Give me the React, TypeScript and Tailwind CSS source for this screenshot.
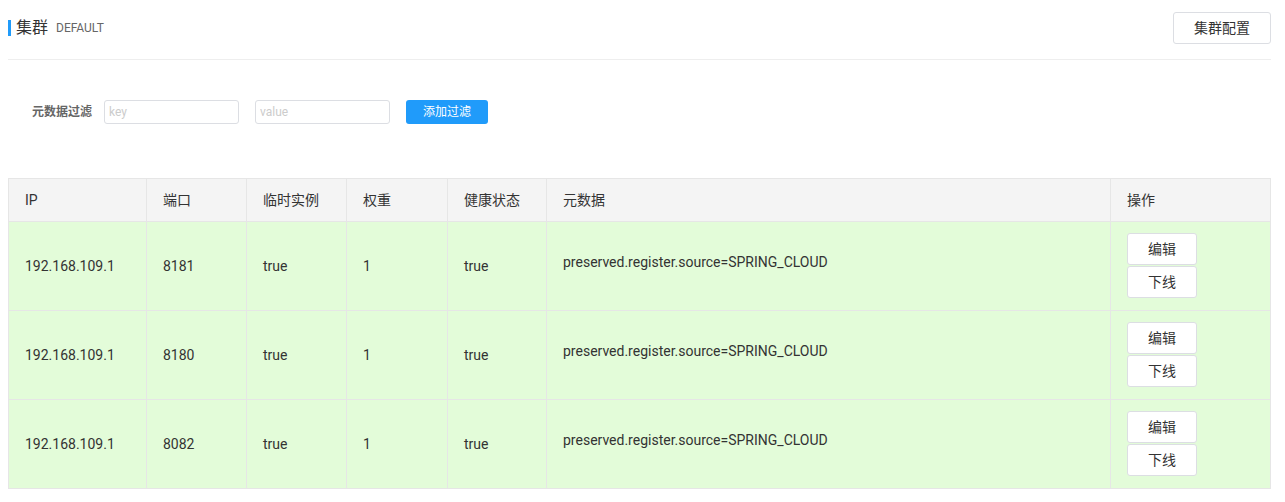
const font = { fontFamily: 'Roboto, "Noto Sans CJK SC", sans-serif' };

const rows = [
  { ip: '192.168.109.1', port: '8181' },
  { ip: '192.168.109.1', port: '8180' },
  { ip: '192.168.109.1', port: '8082' },
];

export default function App() {
  return (
    <div className="pl-2 pr-[14px] bg-white min-h-screen text-[#333]" style={font}>
      {/* Header */}
      <div className="flex items-center justify-between pt-3 pb-[15px] border-b border-[#eee]">
        <div className="flex items-center">
          <span className="w-[3px] h-4 bg-[#209bfa]" />
          <span className="ml-[5px] text-base text-[#333]">集群</span>
          <span className="ml-2 text-xs text-[#666]">DEFAULT</span>
        </div>
        <button className="w-[98px] h-8 border border-[#dcdee3] rounded-[3px] bg-white text-sm text-[#333]">
          集群配置
        </button>
      </div>

      {/* Filter */}
      <div className="flex items-center mt-10 pl-6">
        <span className="text-xs font-bold text-[#666] w-[60px]">元数据过滤</span>
        <input
          className="ml-3 w-[135px] h-6 border border-[#dcdee3] rounded-[3px] px-1 text-xs outline-none placeholder:text-[#ccc]"
          placeholder="key"
        />
        <input
          className="ml-4 w-[135px] h-6 border border-[#dcdee3] rounded-[3px] px-1 text-xs outline-none placeholder:text-[#ccc]"
          placeholder="value"
        />
        <button className="ml-4 w-[82px] h-6 rounded-[3px] bg-[#209bfa] text-white text-xs">添加过滤</button>
      </div>

      {/* Table */}
      <table className="mt-[54px] w-full table-fixed border-collapse text-sm">
        <colgroup>
          <col className="w-[138px]" />
          <col className="w-[100px]" />
          <col className="w-[100px]" />
          <col className="w-[101px]" />
          <col className="w-[99px]" />
          <col className="w-[564px]" />
          <col />
        </colgroup>
        <thead>
          <tr className="bg-[#f4f4f4] h-[43px]">
            {['IP', '端口', '临时实例', '权重', '健康状态', '元数据', '操作'].map((h) => (
              <th key={h} className="border border-[#e6e6e6] px-4 text-left font-normal text-[#333]">
                {h}
              </th>
            ))}
          </tr>
        </thead>
        <tbody>
          {rows.map((r) => (
            <tr key={r.port} className="bg-[#e3fcd9] h-[89px]">
              <td className="border border-[#e6e6e6] px-4">{r.ip}</td>
              <td className="border border-[#e6e6e6] px-4">{r.port}</td>
              <td className="border border-[#e6e6e6] px-4">true</td>
              <td className="border border-[#e6e6e6] px-4">1</td>
              <td className="border border-[#e6e6e6] px-4">true</td>
              <td className="border border-[#e6e6e6] px-4 pb-2">preserved.register.source=SPRING_CLOUD</td>
              <td className="border border-[#e6e6e6] px-4">
                <div className="flex flex-col gap-px -mt-px">
                  <button className="w-[70px] h-8 bg-white border border-[#dcdee3] rounded-[3px] text-sm">编辑</button>
                  <button className="w-[70px] h-8 bg-white border border-[#dcdee3] rounded-[3px] text-sm">下线</button>
                </div>
              </td>
            </tr>
          ))}
        </tbody>
      </table>
    </div>
  );
}
